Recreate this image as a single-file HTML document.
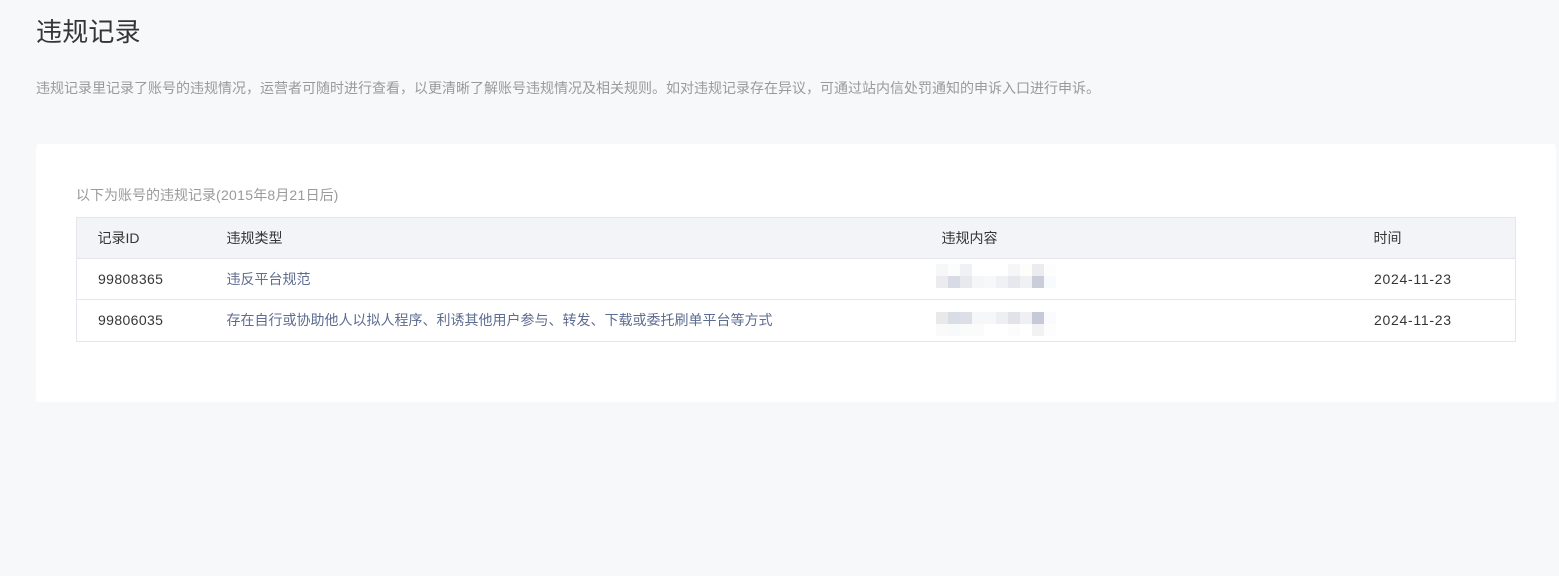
<!DOCTYPE html>
<html lang="zh-CN">
<head>
<meta charset="utf-8">
<title>违规记录</title>
<style>
html,body{margin:0;padding:0;width:1559px;height:576px;overflow:hidden;background:#f6f8f9;}
body{position:relative;font-family:"Liberation Sans","Noto Sans CJK SC",sans-serif;font-size:14px;color:#353535;}
.a{position:absolute;white-space:nowrap;}
.card{position:absolute;left:36px;top:144px;width:1520px;height:258px;background:#fff;border-radius:3px;}
.box{position:absolute;left:76px;top:217px;width:1438px;height:123px;border:1px solid #e4e6eb;}
.head{position:absolute;left:77px;top:218px;width:1438px;height:40px;background:#f3f4f8;}
.line{position:absolute;left:77px;width:1438px;height:1px;background:#e4e6eb;}
.link{color:#5d6c90;}
.t{line-height:20px;}
.id{letter-spacing:.38px;}
.date{letter-spacing:.72px;}
.px{position:absolute;width:12px;height:12px;}
</style>
</head>
<body>
<div class="a" style="left:36px;top:13px;font-size:26px;line-height:38px;letter-spacing:.2px;color:#353535;">违规记录</div>
<div class="a" style="left:36px;top:77.5px;font-size:14px;line-height:20px;color:#9a9a9a;">违规记录里记录了账号的违规情况，运营者可随时进行查看，以更清晰了解账号违规情况及相关规则。如对违规记录存在异议，可通过站内信处罚通知的申诉入口进行申诉。</div>
<div class="card"></div>
<div class="a" style="left:76px;top:185px;font-size:14px;line-height:20px;color:#9a9a9a;">以下为账号的违规记录<span style="letter-spacing:.3px">(2015</span>年<span style="letter-spacing:.3px">8</span>月<span style="letter-spacing:.3px">21</span>日后<span style="letter-spacing:.3px">)</span></div>
<div class="box"></div>
<div class="head"></div>
<div class="line" style="top:258px;"></div>
<div class="line" style="top:299px;"></div>
<div class="a t" style="left:97.5px;top:228px;">记录ID</div>
<div class="a t" style="left:226.5px;top:228px;">违规类型</div>
<div class="a t" style="left:941.5px;top:228px;">违规内容</div>
<div class="a t" style="left:1373.5px;top:228px;">时间</div>
<div class="a t id" style="left:98px;top:269px;">99808365</div>
<div class="a t link" style="left:226.5px;top:269px;">违反平台规范</div>
<div class="a t date" style="left:1374px;top:269px;">2024-11-23</div>
<div class="a t id" style="left:98px;top:310px;">99806035</div>
<div class="a t link" style="left:226.5px;top:310px;">存在自行或协助他人以拟人程序、利诱其他用户参与、转发、下载或委托刷单平台等方式</div>
<div class="a t date" style="left:1374px;top:310px;">2024-11-23</div>

<div class="px" style="left:936px;top:264px;background:#f6f7f9"></div>
<div class="px" style="left:948px;top:264px;background:#fbfcfb"></div>
<div class="px" style="left:960px;top:264px;background:#f0f1f5"></div>
<div class="px" style="left:1008px;top:264px;background:#f6f6f8"></div>
<div class="px" style="left:1020px;top:264px;background:#fdfdfb"></div>
<div class="px" style="left:1032px;top:264px;background:#ebebf0"></div>
<div class="px" style="left:1044px;top:264px;background:#fdfdfd"></div>

<div class="px" style="left:936px;top:276px;background:#ececef"></div>
<div class="px" style="left:948px;top:276px;background:#d6dbe6"></div>
<div class="px" style="left:960px;top:276px;background:#e8e9ee"></div>
<div class="px" style="left:972px;top:276px;background:#f5f6f8"></div>
<div class="px" style="left:984px;top:276px;background:#f7f8fa"></div>
<div class="px" style="left:996px;top:276px;background:#f0f1f5"></div>
<div class="px" style="left:1008px;top:276px;background:#e6e8ed"></div>
<div class="px" style="left:1020px;top:276px;background:#f1f1f3"></div>
<div class="px" style="left:1032px;top:276px;background:#cacdda"></div>
<div class="px" style="left:1044px;top:276px;background:#f8fbfe"></div>

<div class="px" style="left:936px;top:312px;background:#e9e9eb"></div>
<div class="px" style="left:948px;top:312px;background:#d9dde6"></div>
<div class="px" style="left:960px;top:312px;background:#dcdfe8"></div>
<div class="px" style="left:972px;top:312px;background:#f6f7f9"></div>
<div class="px" style="left:984px;top:312px;background:#f6f7f9"></div>
<div class="px" style="left:996px;top:312px;background:#eeeff3"></div>
<div class="px" style="left:1008px;top:312px;background:#e2e3e8"></div>
<div class="px" style="left:1020px;top:312px;background:#f0f0f4"></div>
<div class="px" style="left:1032px;top:312px;background:#c6c9d7"></div>
<div class="px" style="left:1044px;top:312px;background:#fafaff"></div>

<div class="px" style="left:936px;top:324px;background:#fafafb"></div>
<div class="px" style="left:948px;top:324px;background:#f8f9fb"></div>
<div class="px" style="left:960px;top:324px;background:#fafbfb"></div>
<div class="px" style="left:972px;top:324px;background:#fbfbfb"></div>
<div class="px" style="left:1008px;top:324px;background:#fcfcfc"></div>
<div class="px" style="left:1032px;top:324px;background:#f2f2f5"></div>
<div class="px" style="left:1044px;top:324px;background:#fdfdfe"></div>
</body>
</html>
